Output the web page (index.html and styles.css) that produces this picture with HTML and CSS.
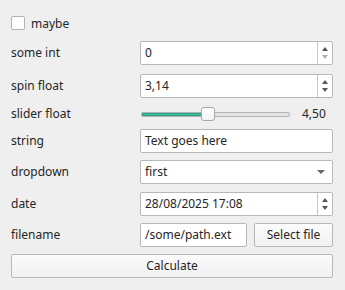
FILE: index.html
```html
<!DOCTYPE html>
<html>
<head>
<meta charset="utf-8">
<link rel="stylesheet" href="styles.css">
</head>
<body>
<div class="form">
  <div class="row check-row">
    <span class="checkbox"></span>
    <span class="check-label">maybe</span>
  </div>
  <div class="row">
    <span class="label">some int</span>
    <div class="field spin">
      <span class="value">0</span>
      <span class="spin-buttons">
        <span class="arrow up"></span>
        <span class="arrow down disabled"></span>
      </span>
    </div>
  </div>
  <div class="row row-float">
    <span class="label">spin float</span>
    <div class="field spin">
      <span class="value">3,14</span>
      <span class="spin-buttons">
        <span class="arrow up"></span>
        <span class="arrow down"></span>
      </span>
    </div>
  </div>
  <div class="row row-slider">
    <span class="label">slider float</span>
    <div class="slider-wrap">
      <div class="slider">
        <div class="groove"><div class="fill"></div></div>
        <div class="handle"></div>
      </div>
      <span class="slider-value">4,50</span>
    </div>
  </div>
  <div class="row">
    <span class="label">string</span>
    <div class="field"><span class="value">Text goes here</span></div>
  </div>
  <div class="row">
    <span class="label">dropdown</span>
    <div class="field combo">
      <span class="value">first</span>
      <span class="combo-arrow"></span>
    </div>
  </div>
  <div class="row row-date">
    <span class="label">date</span>
    <div class="field spin">
      <span class="value">28/08/2025 17:08</span>
      <span class="spin-buttons">
        <span class="arrow up"></span>
        <span class="arrow down"></span>
      </span>
    </div>
  </div>
  <div class="row">
    <span class="label">filename</span>
    <div class="file-pair">
      <div class="field"><span class="value">/some/path.ext</span></div>
      <div class="button">Select file</div>
    </div>
  </div>
  <div class="button calc">Calculate</div>
</div>
</body>
</html>
```

FILE: styles.css
```css
html, body {
  margin: 0;
  padding: 0;
  background: #efefef;
}
body {
  font-family: "Noto Sans", "Open Sans", sans-serif;
  font-size: 12px;
  color: #262626;
  width: 345px;
  height: 290px;
  overflow: hidden;
}
.form {
  display: flex;
  flex-direction: column;
  gap: 7px;
  padding: 12px 12px 0 11px;
}
.row {
  display: grid;
  grid-template-columns: 129px 1fr;
  align-items: center;
  height: 24px;
}
.check-row {
  display: flex;
  height: 22px;
  gap: 6px;
}
.checkbox {
  width: 12px;
  height: 12px;
  border: 1px solid #b4b4b4;
  border-radius: 2px;
  background: #ffffff;
}
.row-float { margin-top: 2px; }
.row-slider { height: 17px; }
.row-date { margin-top: 1px; }
.label { line-height: 18px; }
.field {
  box-sizing: border-box;
  height: 24px;
  background: #ffffff;
  border: 1px solid #b8b8b8;
  border-radius: 2px;
  display: flex;
  align-items: center;
  padding-left: 4px;
}
.value { flex: 1; white-space: nowrap; line-height: 18px; }
.spin-buttons {
  width: 14px;
  height: 100%;
  border-left: 1px solid #c6c6c6;
  display: flex;
  flex-direction: column;
  justify-content: center;
  align-items: center;
  gap: 4px;
}
.arrow {
  width: 0;
  height: 0;
  border-left: 3.5px solid transparent;
  border-right: 3.5px solid transparent;
}
.arrow.up { border-bottom: 4px solid #555555; }
.arrow.down { border-top: 4px solid #555555; }
.arrow.down.disabled { border-top-color: #b0b0b0; }
.combo { padding-right: 7px; }
.combo-arrow {
  width: 0;
  height: 0;
  border-left: 4px solid transparent;
  border-right: 4px solid transparent;
  border-top: 4px solid #666666;
}
.slider-wrap {
  display: flex;
  align-items: center;
}
.slider {
  position: relative;
  width: 149px;
  height: 17px;
  margin-left: 1px;
  display: flex;
  align-items: center;
}
.groove {
  box-sizing: border-box;
  width: 100%;
  height: 5px;
  border: 1px solid #b4b4b4;
  border-radius: 2px;
  background: #e4e4e4;
  overflow: hidden;
}
.fill {
  width: 64px;
  height: 100%;
  background: #3fc5a3;
  box-shadow: inset 0 0 0 1px #2c9c80;
}
.handle {
  position: absolute;
  left: 60px;
  top: 1px;
  box-sizing: border-box;
  width: 14px;
  height: 14px;
  background: linear-gradient(#ffffff, #f4f4f4);
  border: 1px solid #a9a9a9;
  border-radius: 3px;
}
.slider-value {
  margin-left: 12px;
  line-height: 18px;
}
.file-pair {
  display: grid;
  grid-template-columns: 1fr 79px;
  gap: 7px;
}
.button {
  box-sizing: border-box;
  height: 24px;
  background: linear-gradient(#fbfbfb, #f1f1f1);
  border: 1px solid #b8b8b8;
  border-radius: 2px;
  display: flex;
  align-items: center;
  justify-content: center;
  line-height: 18px;
}
```
